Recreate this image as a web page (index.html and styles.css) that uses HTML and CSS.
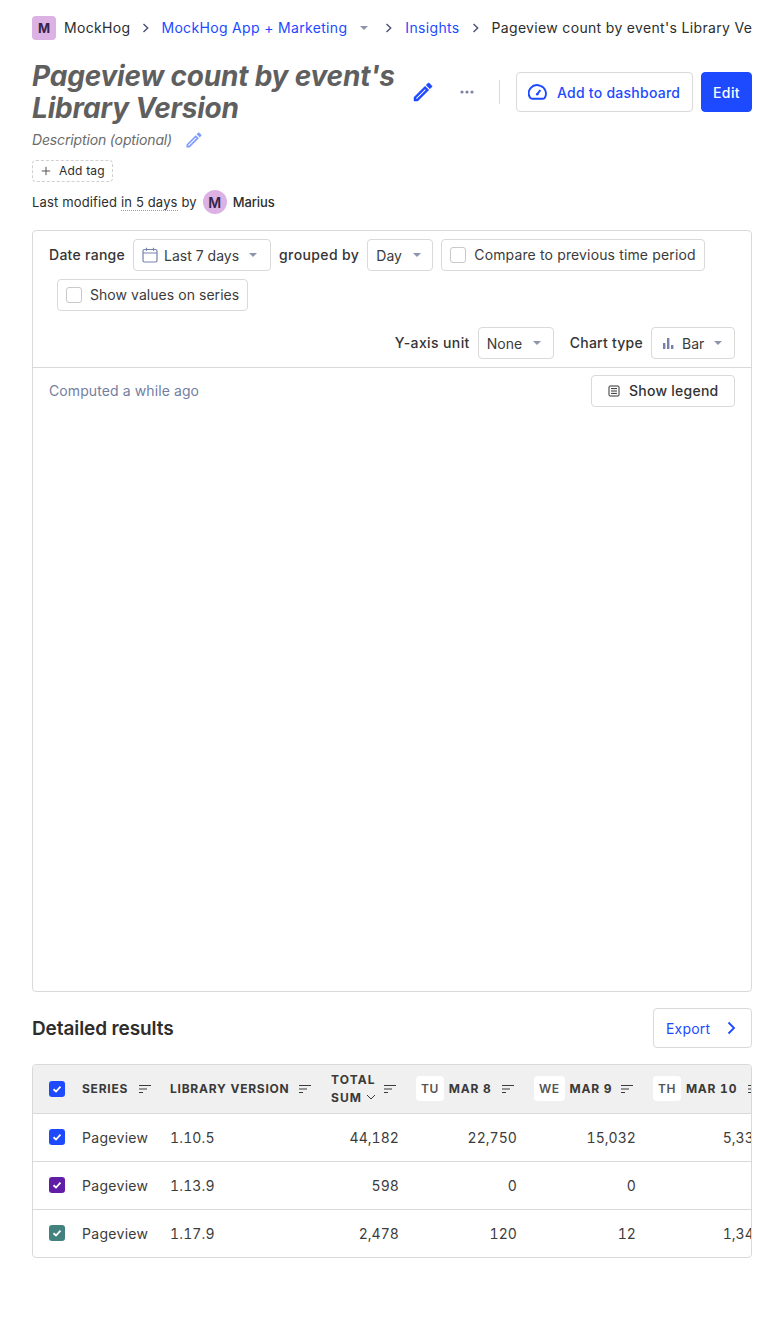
FILE: index.html
```html
<!DOCTYPE html>
<html lang="en">
<head>
<meta charset="utf-8">
<title>Pageview count by event's Library Version</title>
<link rel="stylesheet" href="styles.css">
</head>
<body>
<main class="page">
  <nav class="crumbs">
    <span class="org-badge">M</span>
    <span class="crumb">MockHog</span>
    <svg class="sep" viewBox="0 0 16 16"><path d="M5.500 4 9.700 8 5.500 12" /></svg>
    <a class="crumb link project">MockHog App + Marketing</a>
    <span class="caret crumb-caret"></span>
    <svg class="sep" viewBox="0 0 16 16"><path d="M5.500 4 9.700 8 5.500 12" /></svg>
    <a class="crumb link">Insights</a>
    <svg class="sep" viewBox="0 0 16 16"><path d="M5.500 4 9.700 8 5.500 12" /></svg>
    <span class="crumb current">Pageview count by event's Library Version</span>
  </nav>

  <header class="head">
    <h1 class="title">Pageview count by event's Library Version</h1>
    <svg class="pencil" viewBox="0 0 24 24"><path d="M3 17.25V21h3.75L17.81 9.94l-3.75-3.75L3 17.25zM5.920 19H5v-.92l9.06-9.06.92.92L5.920 19zM20.710 7.040a1 1 0 0 0 0-1.410l-2.340-2.340a1 1 0 0 0-1.410 0l-1.830 1.830 3.750 3.750 1.830-1.830z"/></svg>
    <svg class="dots" viewBox="0 0 16 16"><circle cx="3" cy="8" r="1.600"/><circle cx="8" cy="8" r="1.600"/><circle cx="13" cy="8" r="1.600"/></svg>
    <span class="divider"></span>
    <button class="btn add">
      <svg class="gauge" viewBox="0 0 20 20"><path d="M4 16.500h12a2 2 0 0 0 1.700-1A8.500 8.500 0 0 0 13 3.100 8.500 8.500 0 0 0 2.300 15.500a2 2 0 0 0 1.700 1z" /><path d="M9.500 12 13 7.500" /><circle class="hub" cx="9.700" cy="11.800" r="1.300" /></svg>
      Add to dashboard
    </button>
    <button class="btn primary">Edit</button>
  </header>

  <div class="desc">
    <span class="desc-text">Description (optional)</span>
    <svg class="pencil small" viewBox="0 0 24 24"><path d="M3 17.25V21h3.75L17.81 9.94l-3.75-3.75L3 17.25zM5.920 19H5v-.92l9.06-9.06.92.92L5.920 19zM20.710 7.040a1 1 0 0 0 0-1.410l-2.340-2.340a1 1 0 0 0-1.410 0l-1.830 1.830 3.750 3.750 1.830-1.830z"/></svg>
  </div>

  <div class="tag"><svg class="plus" viewBox="0 0 12 12"><path d="M6 1v10M1 6h10"/></svg>Add tag</div>

  <div class="meta">
    <span>Last modified <span class="dotted">in 5 days</span> by</span>
    <span class="avatar">M</span>
    <span class="author">Marius</span>
  </div>

  <section class="card">
    <div class="filters">
      <div class="filter-row">
        <span class="label">Date range</span>
        <div class="select date">
          <svg class="cal" viewBox="0 0 16 16"><rect x="1" y="2.500" width="14" height="12.500" rx="1.500"/><path d="M1 6h14M4.500 .8v3M11.500 .8v3"/></svg>
          <span>Last 7 days</span><span class="caret"></span>
        </div>
        <span class="label wide">grouped by</span>
        <div class="select day"><span>Day</span><span class="caret"></span></div>
        <label class="check-btn compare"><span class="box"></span>Compare to previous time period</label>
        <label class="check-btn indent"><span class="box"></span>Show values on series</label>
      </div>
      <div class="filter-row end">
        <span class="label wide">Y-axis unit</span>
        <div class="select none"><span>None</span><span class="caret"></span></div>
        <span class="label chart-label">Chart type</span>
        <div class="select bar">
          <svg class="bars" viewBox="0 0 12 12"><rect x="1" y="6" width="2.400" height="6"/><rect x="5" y="1" width="2.400" height="11"/><rect x="9" y="8" width="2.400" height="4"/></svg>
          <span>Bar</span><span class="caret"></span>
        </div>
      </div>
    </div>
    <div class="chart">
      <div class="chart-head">
        <span class="computed">Computed a while ago</span>
        <button class="btn legend">
          <svg class="legend-icon" viewBox="0 0 12 12"><rect x="1" y="1" width="10" height="10" rx="1"/><path d="M3 3.600h6M3 6h6M3 8.400h6"/></svg>
          Show legend
        </button>
      </div>
    </div>
  </section>

  <div class="results-head">
    <h2>Detailed results</h2>
    <button class="btn export">Export <svg class="chev" viewBox="0 0 16 16"><path d="M5.500 2.500 11 8l-5.500 5.500"/></svg></button>
  </div>

  <div class="table-wrap">
    <table class="results">
      <colgroup>
        <col class="c-check"><col class="c-series"><col class="c-lib"><col class="c-total"><col class="c-d1"><col class="c-d2"><col class="c-d3">
      </colgroup>
      <thead>
        <tr>
          <th><span class="tick blue"><svg viewBox="0 0 16 16"><path d="M4.500 8.300 7 10.500l4.500-4.800"/></svg></span></th>
          <th><div class="th">SERIES<svg class="sort" viewBox="0 0 14 10"><path d="M1 1.500h12M1 5h8M1 8.500h4"/></svg></div></th>
          <th><div class="th">LIBRARY VERSION<svg class="sort" viewBox="0 0 14 10"><path d="M1 1.500h12M1 5h8M1 8.500h4"/></svg></div></th>
          <th><div class="th"><span class="two">TOTAL<br>SUM <svg class="down" viewBox="0 0 10 10"><path d="M1 3l4 4 4-4"/></svg></span><svg class="sort" viewBox="0 0 14 10"><path d="M1 1.500h12M1 5h8M1 8.500h4"/></svg></div></th>
          <th><div class="th"><span class="day-chip">TU</span><span class="date-label">MAR 8</span><svg class="sort" viewBox="0 0 14 10"><path d="M1 1.500h12M1 5h8M1 8.500h4"/></svg></div></th>
          <th><div class="th"><span class="day-chip">WE</span><span class="date-label">MAR 9</span><svg class="sort" viewBox="0 0 14 10"><path d="M1 1.500h12M1 5h8M1 8.500h4"/></svg></div></th>
          <th><div class="th"><span class="day-chip">TH</span><span class="date-label">MAR 10</span><svg class="sort" viewBox="0 0 14 10"><path d="M1 1.500h12M1 5h8M1 8.500h4"/></svg></div></th>
        </tr>
      </thead>
      <tbody>
        <tr>
          <td><span class="tick blue"><svg viewBox="0 0 16 16"><path d="M4.500 8.300 7 10.500l4.500-4.800"/></svg></span></td>
          <td>Pageview</td><td class="ver">1.10.5</td><td class="num">44,182</td><td class="num">22,750</td><td class="num">15,032</td><td class="num">5,338</td>
        </tr>
        <tr>
          <td><span class="tick purple"><svg viewBox="0 0 16 16"><path d="M4.500 8.300 7 10.500l4.500-4.800"/></svg></span></td>
          <td>Pageview</td><td class="ver">1.13.9</td><td class="num">598</td><td class="num">0</td><td class="num">0</td><td class="num">0</td>
        </tr>
        <tr>
          <td><span class="tick teal"><svg viewBox="0 0 16 16"><path d="M4.500 8.300 7 10.500l4.500-4.800"/></svg></span></td>
          <td>Pageview</td><td class="ver">1.17.9</td><td class="num">2,478</td><td class="num">120</td><td class="num">12</td><td class="num">1,346</td>
        </tr>
      </tbody>
    </table>
  </div>
</main>
</body>
</html>
```
FILE: styles.css
```css
* { box-sizing: border-box; }
html, body { margin: 0; padding: 0; background: #fff; }
body {
  font-family: Inter, "Liberation Sans", sans-serif;
  font-size: 14px;
  color: #2d2d2d;
  letter-spacing: 0.1px;
}
.page { padding: 16px 32px 64px; width: 784px; height: 1322px; overflow: hidden; }

.crumbs { display: flex; align-items: center; height: 24px; white-space: nowrap; overflow: hidden; letter-spacing: 0.33px; }
.org-badge {
  width: 24px; height: 24px; flex: none; border-radius: 4px; background: #dcb1e3; color: #35234a; letter-spacing: 0;
  display: flex; align-items: center; justify-content: center; font-weight: 700; font-size: 13px; margin-right: 8px;
}
.crumb { flex: none; padding-bottom: 1px; }
.link { color: #1d4aff; }
.project { margin-left: -1px; }
.current { flex: 0 1 auto; overflow: hidden; }
.sep { width: 16px; height: 16px; flex: none; margin: 0 8px; fill: none; stroke: #4a5275; stroke-width: 1.400; }
.caret { display: inline-block; width: 0; height: 0; border-left: 4px solid transparent; border-right: 4px solid transparent; border-top: 4px solid #8f94ae; flex: none; }
.crumb-caret { margin-left: 13px; margin-right: 5px; }

.head { display: flex; align-items: center; margin-top: 16px; height: 72px; }
.title { margin: 0; width: 372px; font-size: 28px; line-height: 32px; font-weight: 700; font-style: italic; color: #5f5f5f; letter-spacing: -0.2px; }
.pencil { width: 24px; height: 24px; fill: #1d4aff; stroke: #1d4aff; stroke-width: 0.5; flex: none; margin-left: 7px; }
.dots { width: 16px; height: 16px; fill: #7d84a3; margin-left: 24px; flex: none; }
.divider { width: 1px; height: 24px; background: #d9d9d9; margin: 0 16px 0 24px; flex: none; }
.btn {
  font: inherit; font-weight: 500; letter-spacing: inherit; background: #fff; border: 1px solid #d9d9d9; border-radius: 4px;
  display: flex; align-items: center; color: #1d4aff; padding: 0; white-space: nowrap;
}
.add { height: 40px; width: 177px; padding-left: 11px; gap: 10px; letter-spacing: 0.25px; }
.gauge { width: 19px; height: 19px; fill: none; stroke: #1d4aff; stroke-width: 2; }
.hub { fill: #1d4aff; stroke: none; }
.primary { height: 40px; width: 51px; margin-left: 8px; background: #1d4aff; border-color: #1d4aff; color: #fff; justify-content: center; letter-spacing: 0.4px; }

.desc { display: flex; align-items: center; height: 24px; font-style: italic; color: #6b6b6b; gap: 12px; letter-spacing: -0.15px; }
.desc-text { padding-bottom: 1px; }
.pencil.small { width: 20px; height: 20px; margin: 0; fill: #7f9bff; stroke: none; }
.tag {
  display: flex; align-items: center; width: 81px; height: 22px; margin-top: 8px; border: 1px dashed #d0d0d0; border-radius: 4px;
  font-size: 12px; padding: 0 0 1px 8px; gap: 8px; letter-spacing: 0.2px;
}
.plus { width: 10px; height: 10px; stroke: #555; stroke-width: 1.200; fill: none; }
.meta { display: flex; align-items: center; height: 24px; margin-top: 8px; font-size: 13px; gap: 6px; letter-spacing: 0.15px; }
.dotted { border-bottom: 1px dotted #9a9a9a; }
.avatar { width: 24px; height: 24px; border-radius: 50%; background: #dcb1e3; color: #35234a; display: flex; align-items: center; justify-content: center; font-weight: 600; font-size: 14px; letter-spacing: 0; }
.author { font-weight: 500; letter-spacing: -0.1px; }

.card { margin-top: 16px; height: 762px; border: 1px solid #d9d9d9; border-radius: 4px; }
.filters { height: 137px; padding: 8px 16px 8px; border-bottom: 1px solid #d9d9d9; }
.filter-row { display: flex; flex-wrap: wrap; align-items: center; gap: 8px; }
.filter-row.end { justify-content: flex-end; margin-top: 16px; }
.label { font-weight: 500; color: #353535; letter-spacing: 0.28px; padding-bottom: 1px; }
.label.wide { letter-spacing: 0.38px; }
.select, .check-btn {
  height: 32px; border: 1px solid #d9d9d9; border-radius: 4px; display: flex; align-items: center; background: #fff; color: #3b3b3b;
}
.select { letter-spacing: 0; }
.date { width: 138px; padding-left: 8px; gap: 6px; }
.date .caret { margin-left: 4px; }
.day { width: 66px; padding-left: 8px; gap: 11px; }
.check-btn { padding: 0 8px 1px; gap: 8px; letter-spacing: 0.05px; }
.check-btn.compare { letter-spacing: 0.14px; }
.indent { margin-left: 8px; }
.box { width: 16px; height: 16px; margin-top: 1px; border: 1px solid #c9c9c9; border-radius: 3px; flex: none; }
.cal { width: 16px; height: 16px; fill: none; stroke: #7782ab; stroke-width: 1.200; flex: none; }
.none { width: 76px; padding-left: 8px; gap: 11px; }
.chart-label { margin-left: 8px; letter-spacing: 0.25px; }
.bar { width: 84px; padding-left: 10px; gap: 8px; }
.bar .caret { margin-left: 2px; }
.bars { width: 12px; height: 12px; fill: #7782ab; }
.chart-head { display: flex; align-items: center; justify-content: space-between; padding: 7px 16px 0; }
.computed { color: #747ea1; padding-bottom: 1px; }
.legend { height: 32px; width: 144px; padding: 0 0 1px 16px; gap: 9px; color: #333; letter-spacing: 0.25px; }
.legend-icon { width: 12px; height: 12px; fill: none; stroke: #333; stroke-width: 1; }

.results-head { display: flex; align-items: center; justify-content: space-between; margin-top: 16px; height: 40px; }
h2 { margin: 0; font-size: 19px; font-weight: 600; letter-spacing: -0.1px; color: #2d2d2d; }
.export { height: 40px; width: 99px; padding-left: 12px; gap: 13px; font-weight: 400; letter-spacing: 0.2px; }
.chev { width: 16px; height: 16px; fill: none; stroke: #1d4aff; stroke-width: 1.800; }

.table-wrap { margin-top: 16px; border: 1px solid #d9d9d9; border-radius: 4px; overflow: hidden; width: 720px; }
.results { border-collapse: collapse; table-layout: fixed; width: 738px; }
.c-check { width: 41px; } .c-series { width: 88px; } .c-lib { width: 160px; } .c-total { width: 85px; }
.c-d1 { width: 118px; } .c-d2 { width: 119px; } .c-d3 { width: 127px; }
th { background: #f0f0f0; height: 48px; padding: 0 8px; text-align: left; border-bottom: 1px solid #d9d9d9; font-size: 12px; font-weight: 700; letter-spacing: 0.75px; color: #3a3a3a; white-space: nowrap; font-variant-numeric: tabular-nums; }
td { height: 48px; padding: 0 8px; border-bottom: 1px solid #d9d9d9; color: #3c3c3c; white-space: nowrap; letter-spacing: 0.3px; font-variant-numeric: tabular-nums; }
tbody tr:last-child td { border-bottom: 0; }
th:first-child, td:first-child { padding: 0 0 0 16px; }
.ver { letter-spacing: 0.15px; }
.num { text-align: right; letter-spacing: 0.05px; }
.th { display: flex; align-items: center; padding-right: 2px; }
.th .sort { margin-left: auto; }
.two { line-height: 18px; letter-spacing: 1.1px; margin-left: 1px; }
.day-chip { background: #fff; border-radius: 4px; font-weight: 600; padding: 5px 5px; color: #555; margin-right: 5px; margin-left: 1px; letter-spacing: 0.5px; }
.date-label { margin-right: 6px; }
.sort { width: 14px; height: 10px; flex: none; fill: none; stroke: #3a3a3a; stroke-width: 1.100; }
.down { width: 10px; height: 10px; fill: none; stroke: #3a3a3a; stroke-width: 1; }
.tick { width: 16px; height: 16px; display: block; border-radius: 3px; }
.tick svg { display: block; width: 16px; height: 16px; fill: none; stroke: #fff; stroke-width: 1.800; }
.blue { background: #1d4aff; } .purple { background: #621da6; } .teal { background: #42827e; }
```
